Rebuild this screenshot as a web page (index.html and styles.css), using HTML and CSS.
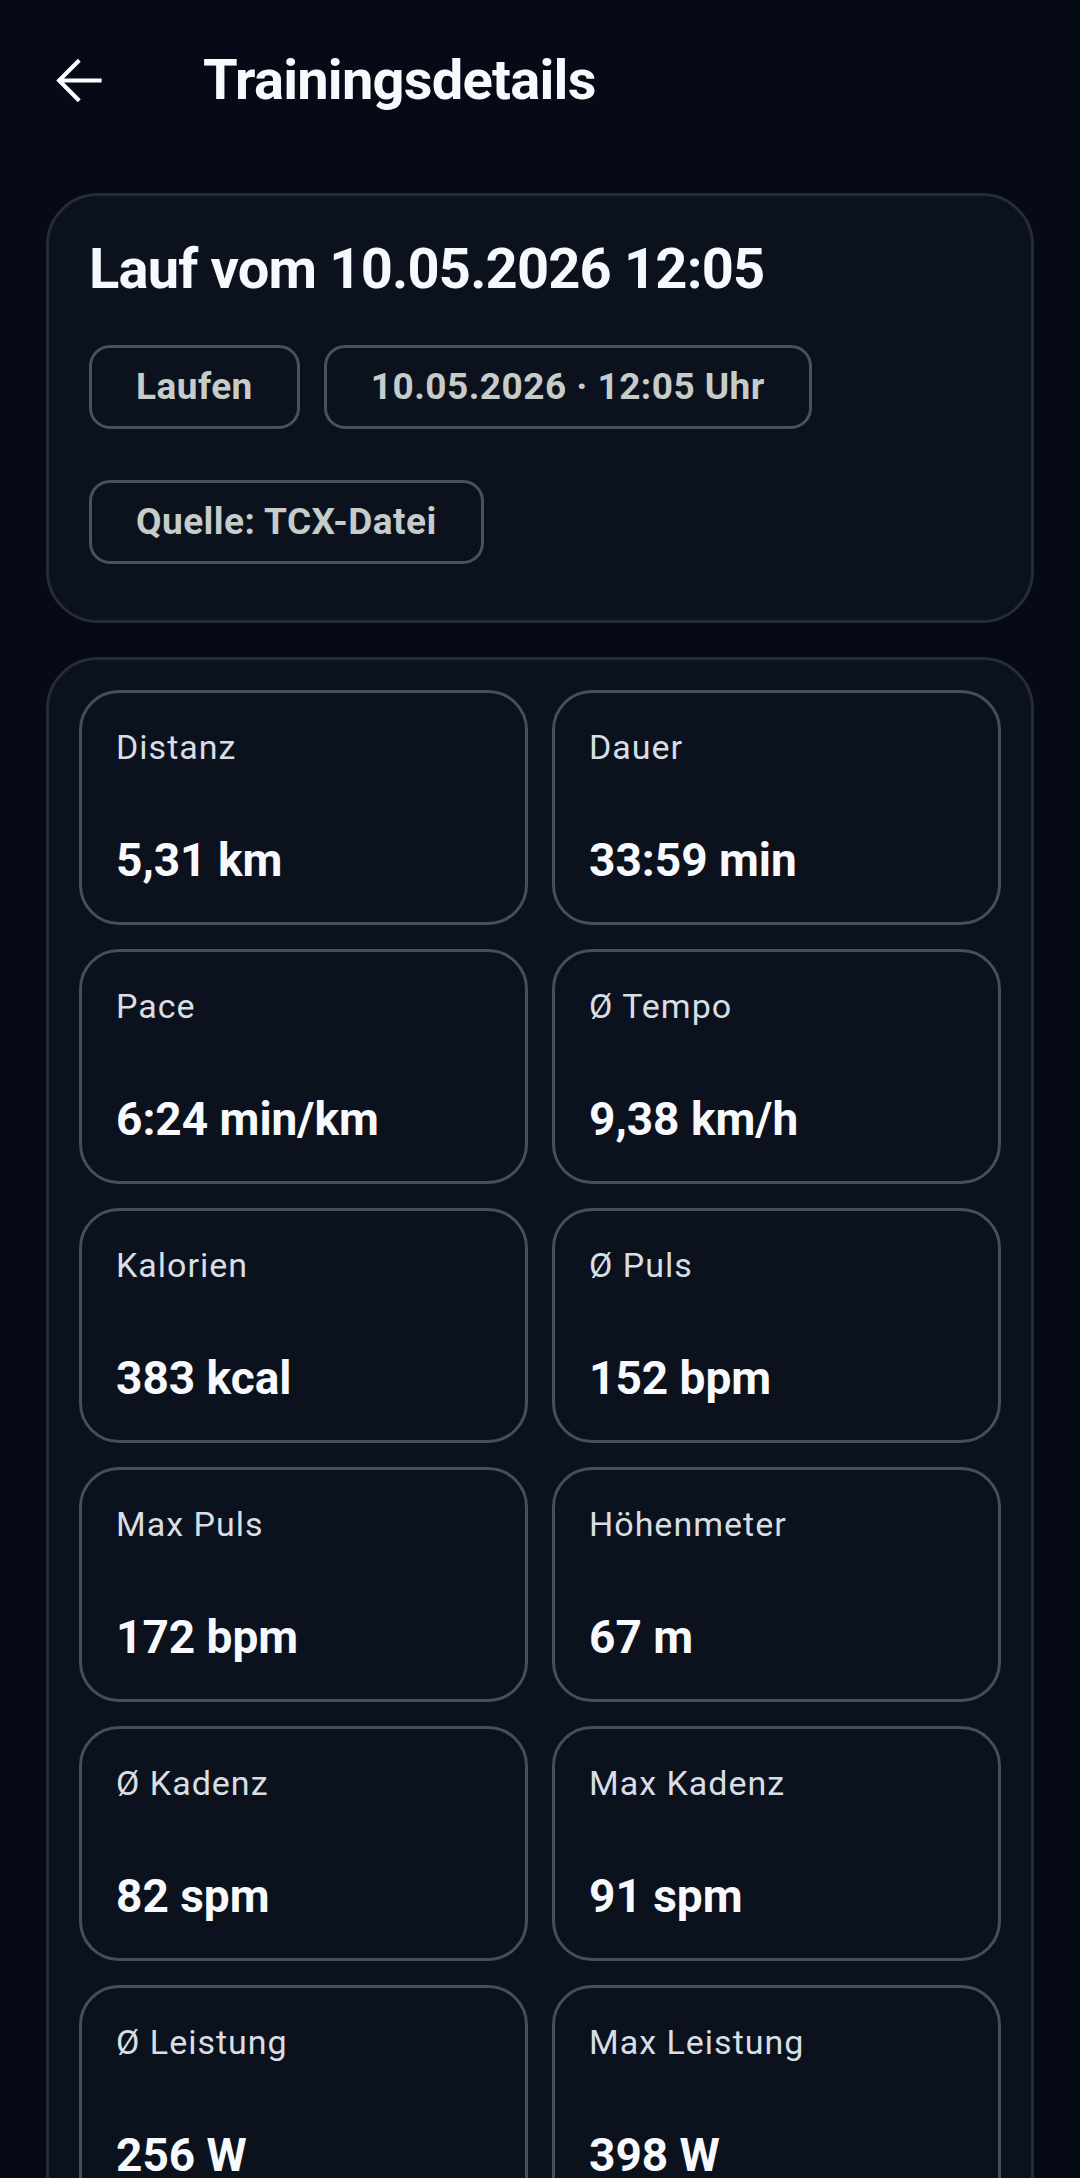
FILE: index.html
```html
<!DOCTYPE html>
<html lang="de">
<head>
  <meta charset="UTF-8" />
  <meta name="viewport" content="width=device-width, initial-scale=1.0"/>
  <title>Trainingsdetails</title>
  <link rel="stylesheet" href="styles.css">
</head>
<body>

  <header class="topbar">
    <button class="back" aria-label="Zurück">
      <svg viewBox="0 0 24 24" width="63" height="63">
        <path d="M20.8 12H4.6M12.3 4.3L4.6 12l7.7 7.7" fill="none" stroke="#ffffff" stroke-width="1.55"/>
      </svg>
    </button>
    <h1>Trainingsdetails</h1>
  </header>

  <main>
    <section class="card summary">
      <h2>Lauf vom 10.05.2026 12:05</h2>
      <div class="chips">
        <span class="chip">Laufen</span>
        <span class="chip">10.05.2026 · 12:05 Uhr</span>
        <span class="chip">Quelle: TCX-Datei</span>
      </div>
    </section>

    <section class="card stats">
      <div class="stat"><span class="label">Distanz</span><span class="value">5,31 km</span></div>
      <div class="stat"><span class="label">Dauer</span><span class="value">33:59 min</span></div>
      <div class="stat"><span class="label">Pace</span><span class="value">6:24 min/km</span></div>
      <div class="stat"><span class="label">Ø Tempo</span><span class="value">9,38 km/h</span></div>
      <div class="stat"><span class="label">Kalorien</span><span class="value">383 kcal</span></div>
      <div class="stat"><span class="label">Ø Puls</span><span class="value">152 bpm</span></div>
      <div class="stat"><span class="label">Max Puls</span><span class="value">172 bpm</span></div>
      <div class="stat"><span class="label">Höhenmeter</span><span class="value">67 m</span></div>
      <div class="stat"><span class="label">Ø Kadenz</span><span class="value">82 spm</span></div>
      <div class="stat"><span class="label">Max Kadenz</span><span class="value">91 spm</span></div>
      <div class="stat"><span class="label">Ø Leistung</span><span class="value">256 W</span></div>
      <div class="stat"><span class="label">Max Leistung</span><span class="value">398 W</span></div>
    </section>
  </main>

</body>
</html>
```

FILE: styles.css
```css
body {
  font-family: Roboto, "Noto Sans", sans-serif;
  background: #060a16;
  color: #f5f8fc;
  margin: 0;
  padding: 0;
}

.topbar {
  display: flex;
  align-items: center;
  height: 160px;
  padding-left: 47px;
}

.back {
  display: flex;
  width: 63px;
  height: 63px;
  padding: 0;
  border: 0;
  background: none;
  margin-right: 93px;
}

.topbar h1 {
  margin: 0;
  font-size: 56px;
  line-height: 66px;
  font-weight: 700;
  letter-spacing: -0.75px;
  color: #f7f9fc;
}

main {
  padding: 33px 46px 0;
}

.card {
  background: #0b121d;
  border: 3px solid #252c36;
  border-radius: 52px;
}

.summary {
  padding: 40px 40px 56px;
  margin-bottom: 34px;
}

.summary h2 {
  margin: 0 0 43px;
  font-size: 56px;
  line-height: 66px;
  font-weight: 700;
  letter-spacing: -0.8px;
}

.chips {
  display: flex;
  flex-wrap: wrap;
  column-gap: 24px;
  row-gap: 51px;
}

.chip {
  border: 3px solid #4a5157;
  border-radius: 21px;
  padding: 18px 44px;
  font-size: 37px;
  line-height: 42px;
  font-weight: 700;
  letter-spacing: 0.45px;
  color: #c5ccca;
}

.stats {
  display: grid;
  grid-template-columns: 1fr 1fr;
  gap: 24px;
  padding: 30px;
}

.stat {
  display: flex;
  flex-direction: column;
  gap: 66px;
  border: 3px solid #474e57;
  border-radius: 40px;
  padding: 34px 34px 35px;
}

.label {
  font-size: 34px;
  line-height: 40px;
  letter-spacing: 1px;
  color: #d8dee4;
}

.value {
  font-size: 46px;
  line-height: 54px;
  font-weight: 700;
  color: #f7f9fc;
}
```
